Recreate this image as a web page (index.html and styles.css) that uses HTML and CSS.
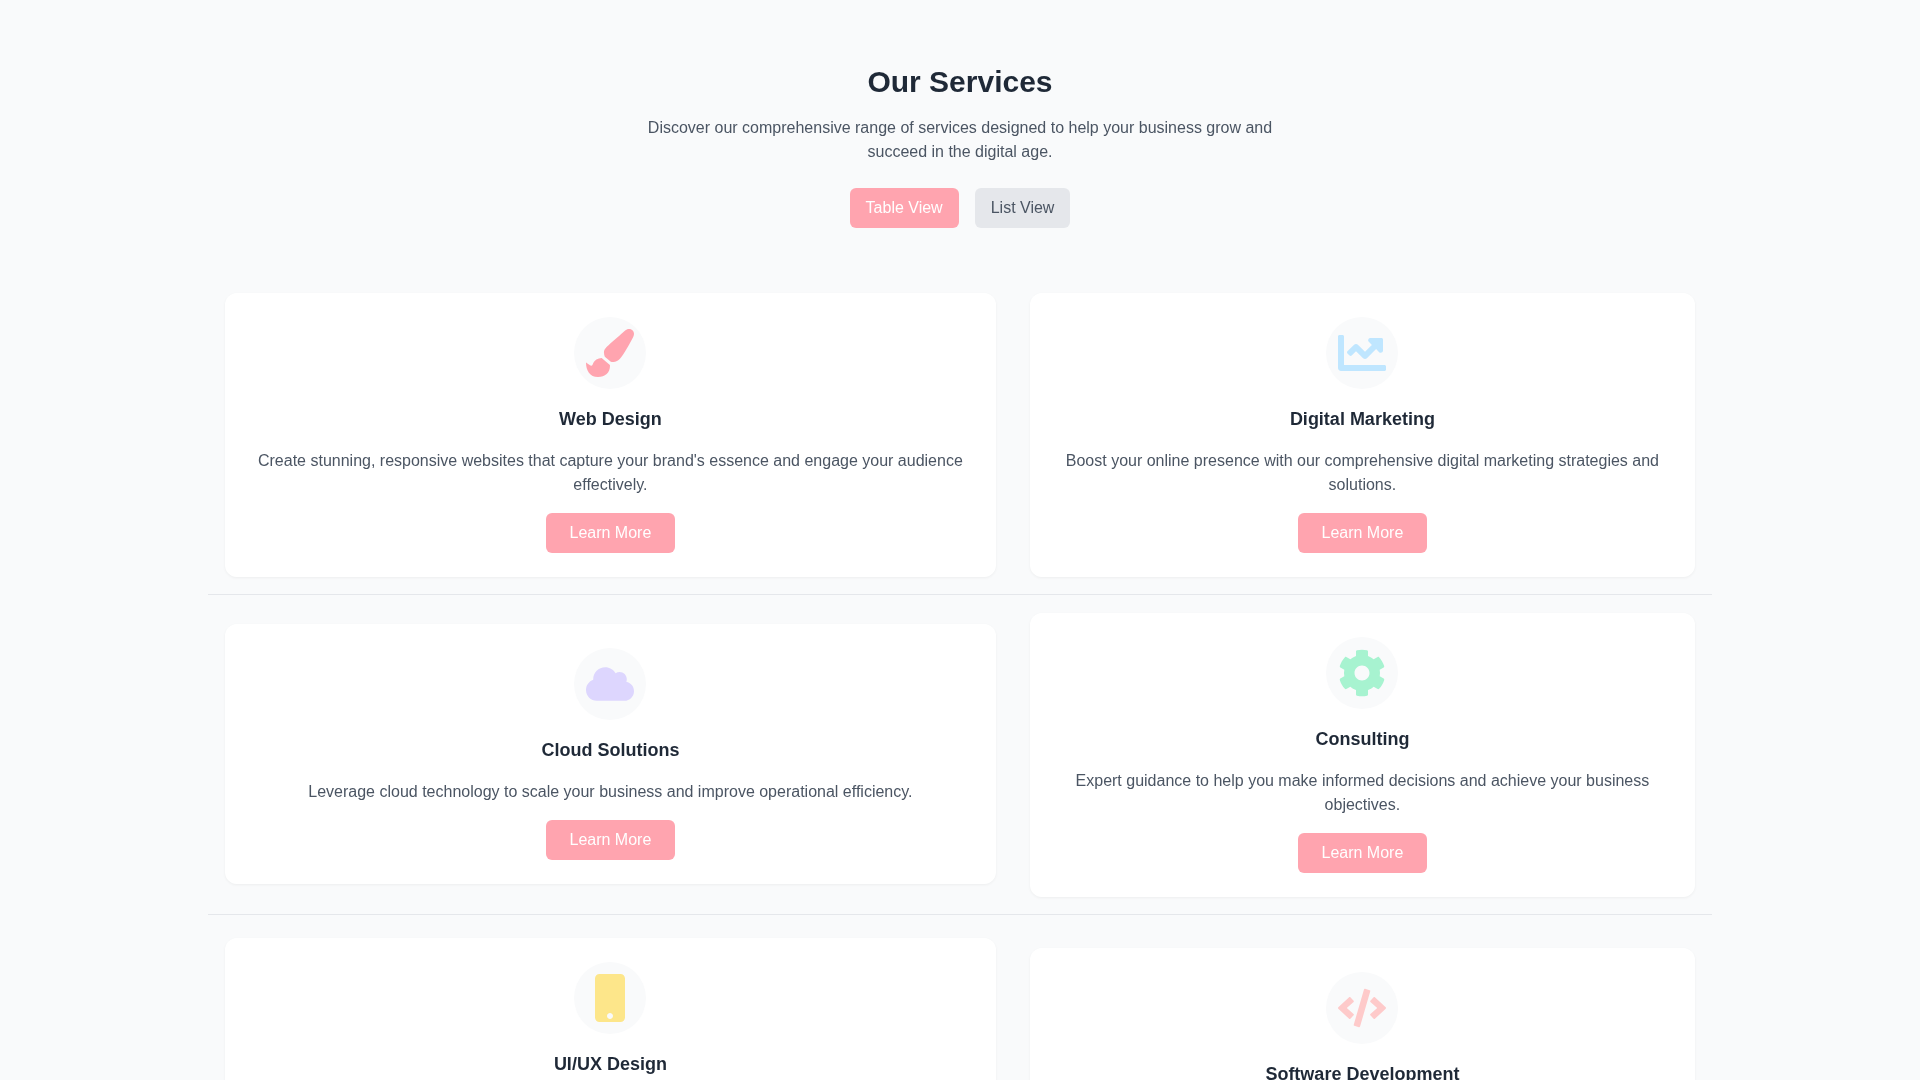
FILE: index.html
```html
<!DOCTYPE html>
<html lang="en">
<head>
    <meta charset="UTF-8">
    <meta name="viewport" content="width=device-width, initial-scale=1.0">
    <title>Our Services</title>
    <link rel="stylesheet" href="styles.css">
</head>
<body>
    <div class="container">
        <!-- Header -->
        <div class="page-header">
            <h1>Our Services</h1>
            <p>Discover our comprehensive range of services designed to help your business grow and succeed in the digital age.</p>
            <div class="view-toggle">
                <button class="toggle-btn active" type="button">Table View</button>
                <button class="toggle-btn" type="button">List View</button>
            </div>
        </div>

        <!-- Services -->
        <table class="services-table">
            <colgroup>
                <col class="col-left">
                <col class="col-right">
            </colgroup>
            <tr>
                <td>
                    <div class="service-card">
                        <div class="icon-circle">
                            <svg class="icon icon-pink" viewBox="0 0 512 512"><path d="M167.02 309.34c-40.12 2.58-76.53 17.86-97.19 72.3-2.35 6.21-8 9.98-14.59 9.98-11.11 0-45.46-27.67-55.25-34.35C0 439.62 37.93 512 128 512c75.86 0 128-43.77 128-120.19 0-3.11-.65-6.08-.97-9.13l-88.01-73.34zM457.89 0c-15.16 0-29.37 6.71-40.21 16.45C213.27 199.05 192 203.34 192 257.09c0 13.7 3.25 26.76 8.73 38.7l63.82 53.18c7.21 1.8 14.64 3.03 22.39 3.03 62.11 0 98.11-45.47 211.16-256.46 7.38-14.35 13.9-29.85 13.9-45.99C512 20.64 486 0 457.89 0z"/></svg>
                        </div>
                        <h3>Web Design</h3>
                        <p>Create stunning, responsive websites that capture your brand's essence and engage your audience effectively.</p>
                        <a class="learn-btn" href="#">Learn More</a>
                    </div>
                </td>
                <td>
                    <div class="service-card">
                        <div class="icon-circle">
                            <svg class="icon icon-blue" viewBox="0 0 512 512"><path d="M496 384H64V80c0-8.84-7.16-16-16-16H16C7.16 64 0 71.16 0 80v336c0 17.67 14.33 32 32 32h464c8.84 0 16-7.16 16-16v-32c0-8.84-7.16-16-16-16zM464 96H345.94c-21.38 0-32.09 25.85-16.97 40.97l32.4 32.4L288 242.75l-73.37-73.37c-12.5-12.5-32.76-12.5-45.25 0l-68.69 68.69c-6.25 6.25-6.25 16.38 0 22.63l22.62 22.62c6.25 6.25 16.38 6.25 22.63 0L192 237.25l73.37 73.37c12.5 12.5 32.76 12.5 45.25 0l96-96 32.4 32.4c15.12 15.12 40.97 4.41 40.97-16.97V112c.01-8.84-7.15-16-16-16z"/></svg>
                        </div>
                        <h3>Digital Marketing</h3>
                        <p>Boost your online presence with our comprehensive digital marketing strategies and solutions.</p>
                        <a class="learn-btn" href="#">Learn More</a>
                    </div>
                </td>
            </tr>
            <tr>
                <td class="cell-raised">
                    <div class="service-card">
                        <div class="icon-circle">
                            <svg class="icon icon-purple" viewBox="0 0 640 640"><path transform="translate(0 64)" d="M537.6 226.6c4.1-10.7 6.4-22.4 6.4-34.6 0-53-43-96-96-96-19.7 0-38.1 6-53.3 16.2C367 64.2 315.3 32 256 32c-88.4 0-160 71.6-160 160 0 2.7.1 5.4.2 8.1C40.2 219.8 0 273.2 0 336c0 79.5 64.5 144 144 144h368c70.7 0 128-57.3 128-128 0-61.9-44-113.6-102.4-125.4z"/></svg>
                        </div>
                        <h3>Cloud Solutions</h3>
                        <p>Leverage cloud technology to scale your business and improve operational efficiency.</p>
                        <a class="learn-btn" href="#">Learn More</a>
                    </div>
                </td>
                <td>
                    <div class="service-card">
                        <div class="icon-circle">
                            <svg class="icon icon-green" viewBox="0 0 512 512"><path d="M487.4 315.7l-42.6-24.6c4.3-23.2 4.3-47 0-70.2l42.6-24.6c4.9-2.8 7.1-8.6 5.5-14-11.1-35.6-30-67.8-54.7-94.6-3.8-4.1-10-5.1-14.8-2.3L380.8 110c-17.9-15.4-38.5-27.3-60.8-35.1V25.8c0-5.6-3.9-10.5-9.4-11.7-36.7-8.2-74.3-7.8-109.2 0-5.5 1.2-9.4 6.1-9.4 11.7V75c-22.2 7.9-42.8 19.8-60.8 35.1L88.7 85.5c-4.9-2.8-11-1.9-14.8 2.3-24.7 26.7-43.6 58.9-54.7 94.6-1.7 5.4.6 11.2 5.5 14L67.3 221c-4.3 23.2-4.3 47 0 70.2l-42.6 24.6c-4.9 2.8-7.1 8.6-5.5 14 11.1 35.6 30 67.8 54.7 94.6 3.8 4.1 10 5.1 14.8 2.3l42.6-24.6c17.9 15.4 38.5 27.3 60.8 35.1v49.2c0 5.6 3.9 10.5 9.4 11.7 36.7 8.2 74.3 7.8 109.2 0 5.5-1.2 9.4-6.1 9.4-11.7v-49.2c22.2-7.9 42.8-19.8 60.8-35.1l42.6 24.6c4.9 2.8 11 1.9 14.8-2.3 24.7-26.7 43.6-58.9 54.7-94.6 1.5-5.5-.7-11.3-5.6-14.1zM256 336c-44.1 0-80-35.9-80-80s35.9-80 80-80 80 35.9 80 80-35.9 80-80 80z"/></svg>
                        </div>
                        <h3>Consulting</h3>
                        <p>Expert guidance to help you make informed decisions and achieve your business objectives.</p>
                        <a class="learn-btn" href="#">Learn More</a>
                    </div>
                </td>
            </tr>
            <tr class="last-row">
                <td>
                    <div class="service-card">
                        <div class="icon-circle">
                            <svg class="icon icon-yellow" viewBox="-96 0 512 512"><path d="M272 0H48C21.5 0 0 21.5 0 48v416c0 26.5 21.5 48 48 48h224c26.5 0 48-21.5 48-48V48c0-26.5-21.5-48-48-48zM160 480c-17.7 0-32-14.3-32-32s14.3-32 32-32 32 14.3 32 32-14.3 32-32 32z"/></svg>
                        </div>
                        <h3>UI/UX Design</h3>
                        <p>Design intuitive interfaces and smooth user journeys that keep your customers coming back for more.</p>
                        <a class="learn-btn" href="#">Learn More</a>
                    </div>
                </td>
                <td class="cell-lower">
                    <div class="service-card">
                        <div class="icon-circle">
                            <svg class="icon icon-rose" viewBox="0 0 640 640"><path transform="translate(0 64)" d="M278.9 511.5l-61-17.7c-6.4-1.8-10-8.5-8.2-14.9L346.2 8.7c1.8-6.4 8.5-10 14.9-8.2l61 17.7c6.4 1.8 10 8.5 8.2 14.9L293.8 503.3c-1.9 6.4-8.5 10.1-14.9 8.2zm-114-112.2l43.5-46.4c4.6-4.9 4.3-12.7-.8-17.2L117 256l90.6-79.7c5.1-4.5 5.5-12.3.8-17.2l-43.5-46.4c-4.5-4.8-12.1-5.1-17-.5L3.8 247.2c-5.1 4.7-5.1 12.8 0 17.5l144.1 135.1c4.9 4.6 12.5 4.4 17-.5zm327.2.6l144.1-135.1c5.1-4.7 5.1-12.8 0-17.5L492.1 112.1c-4.8-4.5-12.4-4.3-17 .5L431.6 159c-4.6 4.9-4.3 12.7.8 17.2L523 256l-90.6 79.7c-5.1 4.5-5.5 12.3-.8 17.2l43.5 46.4c4.5 4.9 12.1 5.1 17 .6z"/></svg>
                        </div>
                        <h3>Software Development</h3>
                        <p>Custom software built around your needs, from first idea to final release.</p>
                        <a class="learn-btn" href="#">Learn More</a>
                    </div>
                </td>
            </tr>
        </table>
    </div>
</body>
</html>
```

FILE: styles.css
```css
/* General */
* {
    box-sizing: border-box;
}

body {
    font-family: "Liberation Sans", Arial, sans-serif;
    font-size: 16px;
    line-height: 1.5;
    background-color: #f9fafb;
    color: #4b5563;
    margin: 0;
}

.container {
    width: 1504px;
    margin: 0 auto;
    padding-top: 64px;
    will-change: opacity;
}

/* Header */
.page-header {
    text-align: center;
    margin-bottom: 47px;
}

.page-header h1 {
    margin: 0 0 16px;
    font-size: 30px;
    line-height: 36px;
    font-weight: 700;
    color: #1f2937;
}

.page-header p {
    max-width: 672px;
    margin: 0 auto 24px;
}

.view-toggle {
    display: flex;
    justify-content: center;
    gap: 16px;
}

.toggle-btn {
    height: 40px;
    padding: 8px 16px;
    border: none;
    border-radius: 6px;
    background-color: #e5e7eb;
    color: #4b5563;
    font-family: inherit;
    font-size: 16px;
    line-height: 24px;
}

.toggle-btn.active {
    background-color: #ffa4af;
    color: #fff;
}

/* Table */
.services-table {
    width: 100%;
    table-layout: fixed;
    border-collapse: collapse;
}

.col-left {
    width: 805px;
}

.col-right {
    width: 699px;
}

.services-table tr {
    border-bottom: 1px solid #e5e7eb;
}

.services-table .last-row {
    border-bottom: none;
}

.services-table td {
    padding: 18px 17.1px 17px 16.9px;
    vertical-align: middle;
}

.services-table .cell-raised {
    padding-bottom: 19px;
}

.services-table .last-row td {
    padding-top: 23px;
    vertical-align: top;
}

.services-table .last-row .cell-lower {
    padding-top: 33px;
}

/* Cards */
.service-card {
    padding: 24px;
    border-radius: 12px;
    background-color: #fff;
    box-shadow: 0 1px 3px rgba(0, 0, 0, 0.05);
    text-align: center;
}

.service-card h3 {
    margin: 17px 0 16px;
    font-size: 18px;
    line-height: 27px;
    font-weight: 700;
    color: #1f2937;
}

.service-card p {
    margin: 0 0 16px;
}

.icon-circle {
    display: flex;
    justify-content: center;
    align-items: center;
    width: 72px;
    height: 72px;
    margin: 0 auto;
    border-radius: 50%;
    background-color: #f9fafb;
}

.icon {
    width: 48px;
    height: 48px;
}

.icon-pink { fill: #ffa4af; }
.icon-blue { fill: #bfe6ff; }
.icon-purple { fill: #ddd6fe; }
.icon-green { fill: #a7f3d0; }
.icon-yellow { fill: #fde68a; }
.icon-rose { fill: #fecaca; }

.learn-btn {
    display: block;
    width: fit-content;
    height: 40px;
    margin: 0 auto;
    padding: 8px 23.6px;
    border-radius: 6px;
    background-color: #ffa4af;
    color: #fff;
    text-decoration: none;
}
```
